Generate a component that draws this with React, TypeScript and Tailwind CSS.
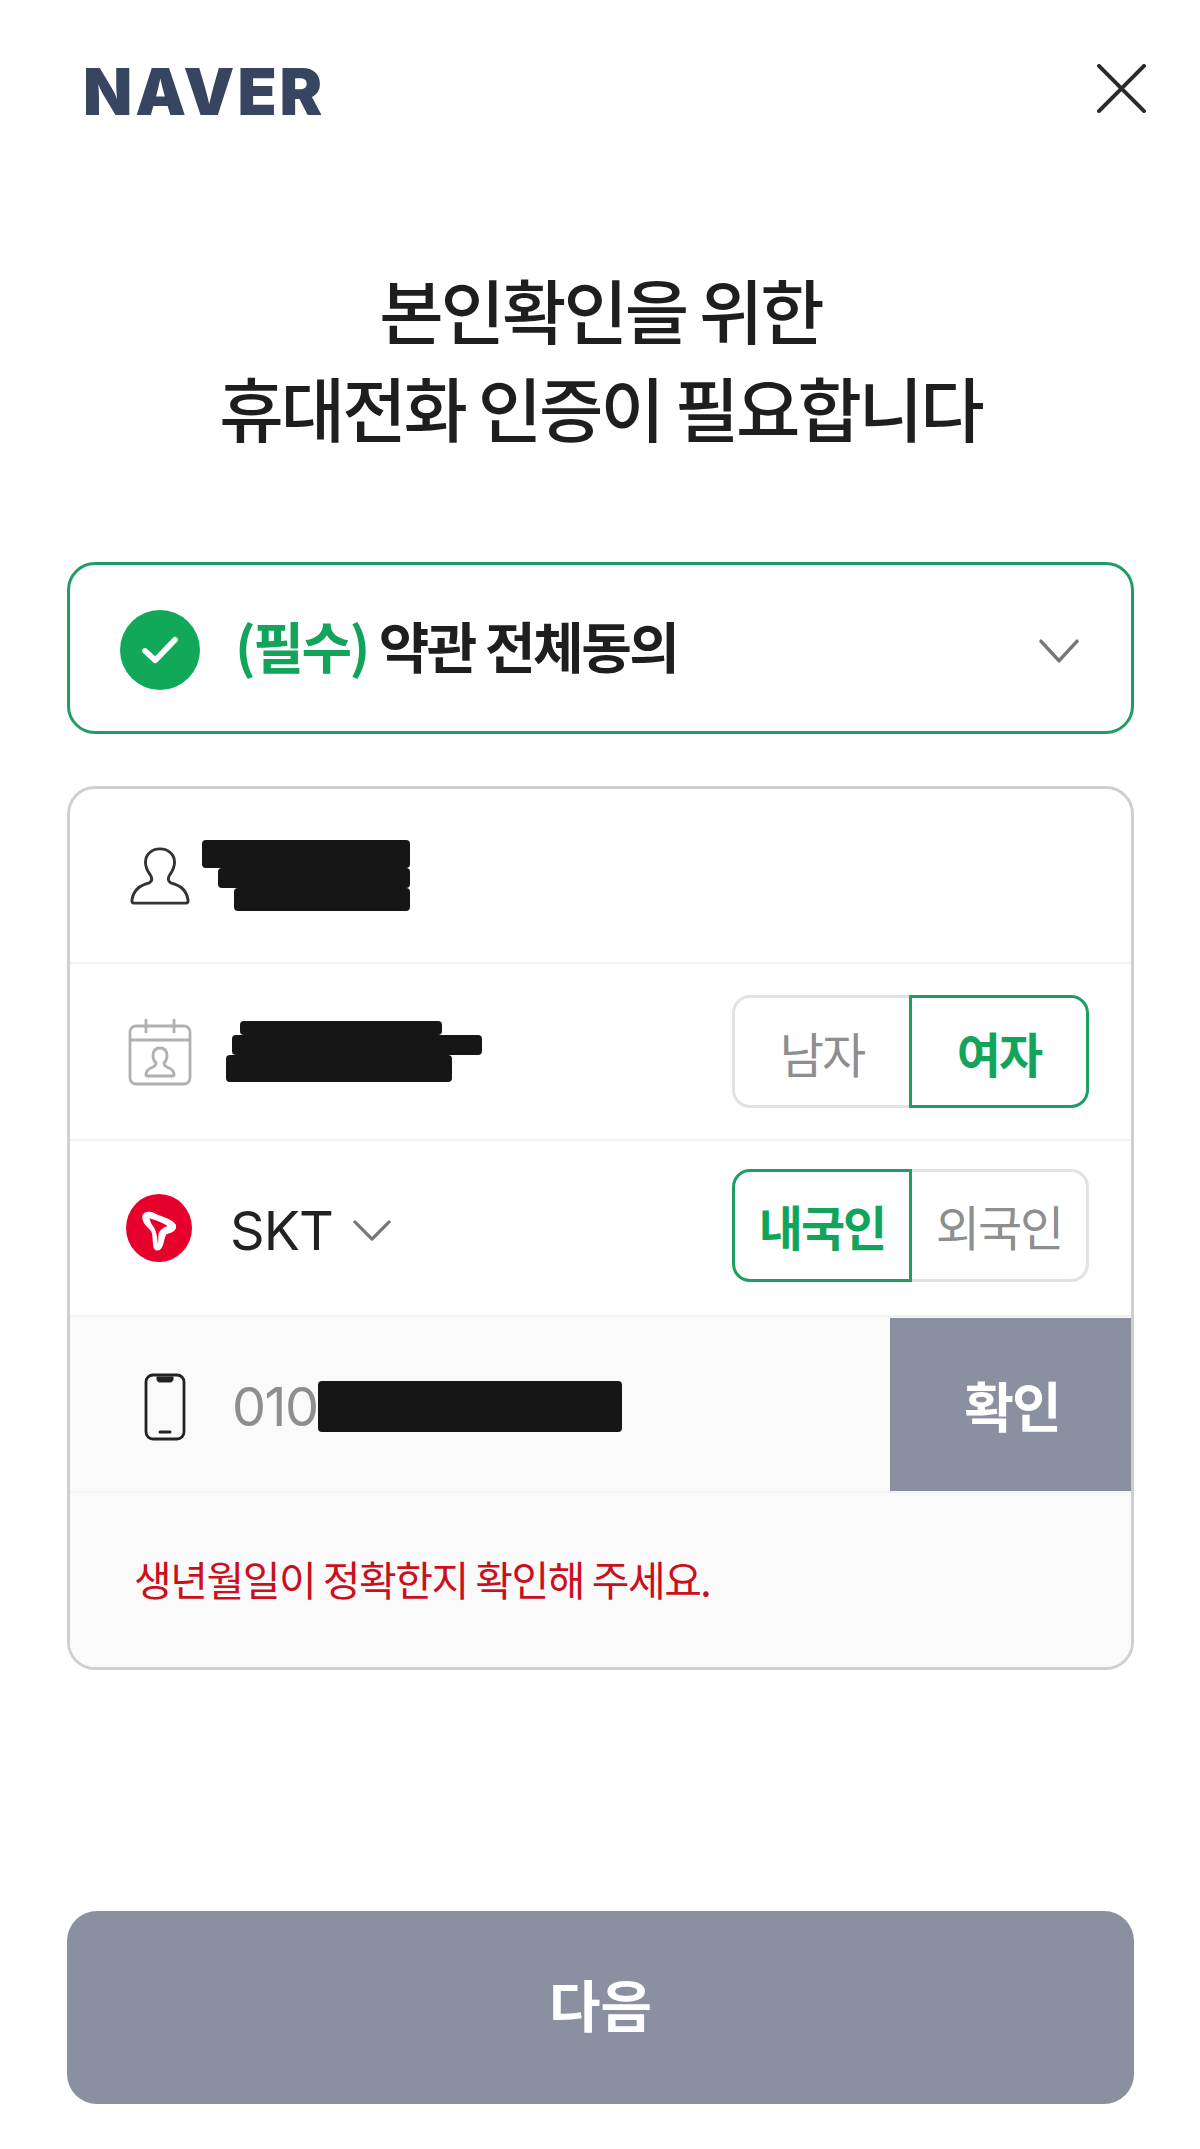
import React from 'react';

const font = "font-['Noto_Sans_CJK_KR','Noto_Sans',sans-serif]";

const Chevron = ({ className }: { className: string }) => (
  <svg viewBox="0 0 40 24" fill="none" preserveAspectRatio="none" className={className}>
    <path d="M2 3 L20 21 L38 3" stroke="#777" strokeWidth="3.4" strokeLinecap="round" strokeLinejoin="round" />
  </svg>
);

const PersonIcon = () => (
  <svg viewBox="0 0 62 60" fill="none" className="w-[60px] h-[60px] shrink-0">
    <path
      d="M31 2 C22 2 16 8 16 16 C16 22 19 26 21 29 C23 32 23 35 20 37 C13 39 4 42 2 55 C2 57 3 58 4 58 L58 58 C59 58 60 57 60 55 C58 42 49 39 42 37 C39 35 39 32 41 29 C43 26 46 22 46 16 C46 8 40 2 31 2 Z"
      stroke="#333"
      strokeWidth="3"
      strokeLinejoin="round"
    />
  </svg>
);

const CalendarIcon = () => (
  <svg viewBox="0 0 64 68" fill="none" stroke="#b0b0b0" strokeWidth="2.8" className="w-[64px] h-[68px] shrink-0">
    <rect x="2" y="8" width="60" height="58" rx="6" />
    <path d="M2 22 H62 M18 1 V15 M46 1 V15" />
    <path d="M32 30 C27 30 25 33 25 38 C25 41 26 43 28 45 C28 47 27 48 25 49 C21 51 18 52 18 57 C18 58 19 58 20 58 L44 58 C45 58 46 58 46 57 C46 52 43 51 39 49 C37 48 36 47 36 45 C38 43 39 41 39 38 C39 33 37 30 32 30 Z" />
  </svg>
);

const SktIcon = () => (
  <svg viewBox="0 0 66 66" preserveAspectRatio="none" className="w-[66px] h-[68px] shrink-0">
    <circle cx="33" cy="33" r="33" fill="#e8002d" />
    <path
      d="M17 21 C19 17 25 17 30 20 C36 23 46 25 49 30 C51 35 45 37 41 38 C37 40 38 48 35 52 C33 55 29 55 28 51 C27 46 28 40 26 36 C23 32 16 28 17 21 Z"
      fill="#fff"
      stroke="#fff"
      strokeWidth="1.5"
      strokeLinejoin="round"
    />
    <path d="M23.5 23.5 C29 25 37 28 41.5 31 C37 32.5 33.5 35 32.5 39 L32 49 C31.5 44 30.5 36 28 32.5 C26 30 24 27 23.5 23.5 Z" fill="#e8002d" />
  </svg>
);

const PhoneIcon = () => (
  <svg viewBox="0 0 42 68" fill="none" stroke="#222" className="w-[42px] h-[68px] shrink-0">
    <rect x="2" y="2" width="38" height="64" rx="7" strokeWidth="2.8" />
    <path d="M13 4 H29 V6 C29 8 28 9 26 9 H16 C14 9 13 8 13 6 Z" fill="#222" strokeWidth="1" />
    <path d="M16 59 H26" strokeWidth="3" strokeLinecap="round" />
  </svg>
);

const Redact = ({ className }: { className: string }) => <div className={`bg-[#161616] rounded-[4px] ${className}`} />;

const Toggle = ({ left, right, active, className = '' }: { left: string; right: string; active: 'left' | 'right'; className?: string }) => {
  const on = 'text-[#13a45c] font-bold border-[3px] border-[#1f9d62]';
  const off = 'text-[#8e8e8e] border-[3px] border-[#e2e2e2]';
  return (
    <div className={`flex h-[113px] w-[357px] shrink-0 text-[48px] tracking-[-2px] ${className}`}>
      <div className={`flex-1 flex items-center justify-center rounded-l-[18px] ${active === 'left' ? on : `${off} border-r-0`}`}>{left}</div>
      <div className={`flex-1 flex items-center justify-center rounded-r-[18px] ${active === 'right' ? on : `${off} border-l-0`}`}>{right}</div>
    </div>
  );
};

export default function App() {
  return (
    <div className={`${font} w-[1200px] h-[2149px] bg-white text-[#1e1e1e] flex flex-col pl-[67px] pr-[66px] overflow-hidden`}>
      <header className="h-[190px] flex items-start justify-between">
        <div className="font-['Inter'] font-black text-[#374560] text-[64px] leading-none mt-[60px] ml-[16px] tracking-[3px]">NAVER</div>
        <svg viewBox="0 0 50 50" fill="none" className="w-[49px] h-[49px] mt-[64px] mr-[-12px]">
          <path d="M2 2 L48 48 M48 2 L2 48" stroke="#2a2a2a" strokeWidth="4" strokeLinecap="round" />
        </svg>
      </header>

      <h1 className="text-center text-[70px] font-medium leading-[98px] tracking-[-3px] mt-[70px]">
        본인확인을 위한
        <br />
        휴대전화 인증이 필요합니다
      </h1>

      <section className="mt-[106px] h-[172px] border-[3px] border-[#1f9d62] rounded-[28px] flex items-center pl-[50px] pr-[52px]">
        <div className="w-[80px] h-[80px] rounded-full bg-[#12a85a] flex items-center justify-center mt-[3px]">
          <svg viewBox="0 0 40 32" fill="none" className="w-[38px] h-[30px]">
            <path d="M4 17 L15 27 L36 5" stroke="#fff" strokeWidth="6" strokeLinecap="round" strokeLinejoin="round" />
          </svg>
        </div>
        <div className="ml-[35px] mb-[8px] text-[55px] font-bold tracking-[-2.5px] flex-1">
          <span className="text-[#13a45c] mr-[1px]">(필수)</span> 약관 전체동의
        </div>
        <Chevron className="w-[40px] h-[26px] mt-[6px]" />
      </section>

      <section className="mt-[52px] h-[884px] border-[3px] border-[#cdd0d3] rounded-[28px] flex flex-col overflow-hidden">
        <div className="h-[175px] border-b-2 border-[#f2f2f2] flex items-center pl-[60px] gap-[12px]">
          <PersonIcon />
          <div className="flex flex-col items-end w-[208px]">
            <Redact className="w-[208px] h-[28px]" />
            <Redact className="w-[192px] h-[20px]" />
            <Redact className="w-[176px] h-[23px]" />
          </div>
        </div>

        <div className="h-[177px] border-b-2 border-[#f2f2f2] flex items-center pl-[58px] pr-[42px]">
          <CalendarIcon />
          <div className="ml-[34px] flex flex-col flex-1 items-start">
            <Redact className="w-[202px] h-[14px] ml-[14px]" />
            <Redact className="w-[250px] h-[20px] ml-[6px]" />
            <Redact className="w-[226px] h-[27px]" />
          </div>
          <Toggle left="남자" right="여자" active="right" />
        </div>

        <div className="h-[176px] border-b-2 border-[#f2f2f2] flex items-center pl-[56px] pr-[42px]">
          <SktIcon />
          <div className="ml-[38px] mt-[4px] font-['Inter'] text-[54px] tracking-[-1px] text-[#222] flex-1 flex items-center">
            SKT
            <Chevron className="w-[38px] h-[23px] ml-[20px]" />
          </div>
          <Toggle left="내국인" right="외국인" active="left" className="mb-[6px]" />
        </div>

        <div className="h-[176px] bg-[#fafafa] border-b-2 border-[#f2f2f2] flex">
          <div className="flex-1 flex items-center pl-[74px] pt-[5px]">
            <PhoneIcon />
            <div className="ml-[46px] font-['Inter'] text-[54px] tracking-[-1.5px] text-[#8e8e8e]">010</div>
            <Redact className="w-[304px] h-[51px]" />
          </div>
          <div className="w-[241px] h-[173px] mt-px pl-[3px] bg-[#8a90a0] text-white text-[54px] font-bold tracking-[-2px] flex items-center justify-center">확인</div>
        </div>

        <div className="flex-1 bg-[#fafafa] pl-[64px] pt-[55px] text-[#cc0f1c] text-[41px] tracking-[-1.5px] leading-[60px]">
          생년월일이 정확한지 확인해 주세요.
        </div>
      </section>

      <button className="mt-[241px] h-[193px] pb-[10px] rounded-[30px] bg-[#8a90a0] text-white text-[56px] font-bold">다음</button>
    </div>
  );
}
